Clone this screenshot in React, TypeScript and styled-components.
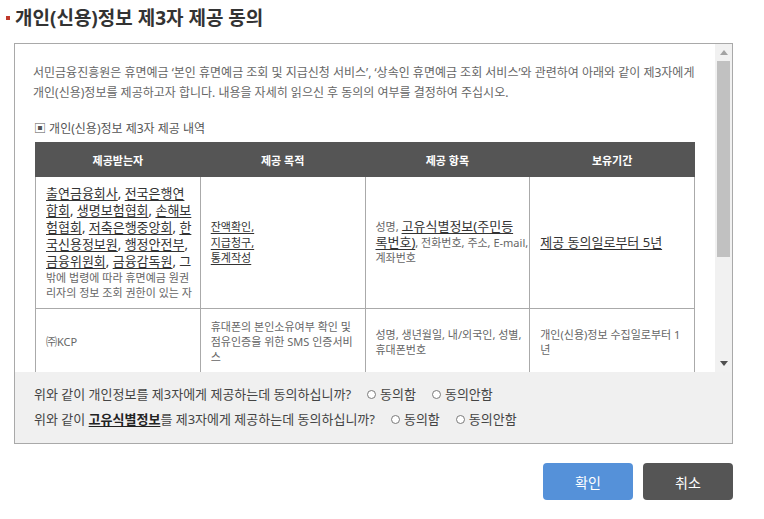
import React from "react";
import styled, { createGlobalStyle } from "styled-components";

const Global = createGlobalStyle`
  html, body { margin: 0; padding: 0; background: #fff; }
  body { font-family: "Noto Sans", "Noto Sans CJK KR", sans-serif; color: #555; }
  * { box-sizing: border-box; }
`;

const Page = styled.div`
  width: 764px;
  height: 519px;
  padding: 6px 31px 0 6px;
  display: flex;
  flex-direction: column;
`;

const Title = styled.h1`
  margin: 0;
  height: 24px;
  display: flex;
  align-items: center;
  gap: 5px;
  font-size: 19px;
  line-height: 24px;
  font-weight: 700;
  color: #333;
`;

const TitleMark = styled.span`
  flex: none;
  width: 4px;
  height: 4px;
  background: #c0392b;
`;

const Dialog = styled.div`
  margin: 13px 0 0 8px;
  height: 401px;
  border: 1px solid #a9a9a9;
  display: flex;
  flex-direction: column;
`;

const ScrollArea = styled.div`
  height: 328px;
  display: flex;
  flex: none;
`;

const Content = styled.div`
  flex: 1;
  overflow: hidden;
  padding: 19px 21px 0 18px;
  background: #fff;
`;

const Intro = styled.p`
  margin: 0;
  font-size: 12px;
  line-height: 20px;
  color: #666;
  white-space: nowrap;
`;

const SectionLabel = styled.p`
  margin: 16px 0 3px 1px;
  font-size: 12px;
  line-height: 20px;
  color: #555;
`;

const Table = styled.table`
  width: 660px;
  margin-left: 2px;
  border-collapse: collapse;
  table-layout: fixed;
`;

const Th = styled.th`
  height: 34px;
  background: #555;
  border: 1px solid #555;
  color: #fff;
  font-size: 11px;
  font-weight: 700;
  text-align: center;
  vertical-align: middle;
`;

const Td = styled.td<{ $pad?: number }>`
  border: 1px solid #aaa;
  padding: ${(p) => p.$pad ?? 8}px 10px;
  vertical-align: middle;
  font-size: 11px;
  line-height: 15px;
  color: #666;
`;

const Line = styled.span<{ $size?: number; $lh?: number }>`
  display: block;
  white-space: nowrap;
  font-size: ${(p) => p.$size ?? 11}px;
  line-height: ${(p) => p.$lh ?? 15}px;
  color: ${(p) => ((p.$size ?? 11) > 11 ? "#333" : "#666")};
`;

const Big = styled.span<{ $u?: boolean }>`
  font-size: 13px;
  color: #333;
  text-decoration: ${(p) => (p.$u === false ? "none" : "underline")};
  text-underline-offset: 2px;
`;

const Purpose = styled.span`
  display: block;
  font-size: 11px;
  line-height: 15.5px;
  color: #333;
  text-decoration: underline;
  text-underline-offset: 2px;
`;

const Scrollbar = styled.div`
  flex: none;
  width: 17px;
  background: #f1f1f1;
  display: flex;
  flex-direction: column;
`;

const ScrollButton = styled.div`
  height: 17px;
  flex: none;
  display: flex;
  align-items: center;
  justify-content: center;
`;

const Track = styled.div`
  flex: 1;
  padding: 0 2px;
`;

const Thumb = styled.div`
  height: 196px;
  background: #c1c1c1;
`;

const Agreement = styled.div`
  flex: 1;
  background: #f0f0f0;
  padding: 10px 19px;
  font-size: 13px;
  line-height: 25px;
  color: #444;
`;

const Question = styled.div`
  display: flex;
  align-items: center;
  gap: 16px;
  white-space: nowrap;
`;

const Bold = styled.span`
  font-weight: 700;
  color: #222;
  text-decoration: underline;
  text-underline-offset: 2px;
`;

const Radio = styled.label`
  display: inline-flex;
  align-items: center;
  gap: 4px;
`;

const Circle = styled.span`
  width: 9px;
  height: 9px;
  border: 1px solid #7a7a7a;
  border-radius: 50%;
  background: #fff;
`;

const Buttons = styled.div`
  margin-top: 19px;
  display: flex;
  justify-content: flex-end;
  gap: 10px;
`;

const Button = styled.button<{ $primary?: boolean }>`
  width: 90px;
  height: 37px;
  border: none;
  border-radius: 4px;
  background: ${(p) => (p.$primary ? "#5591d9" : "#555555")};
  color: #fff;
  font-family: inherit;
  font-size: 14px;
  cursor: pointer;
`;

const Arrow = ({ up, color }: { up?: boolean; color: string }) => (
  <svg width="8" height="5" viewBox="0 0 8 5">
    <polygon points={up ? "0,5 8,5 4,0" : "0,0 8,0 4,5"} fill={color} />
  </svg>
);

const Comma = ({ text = ", " }: { text?: string }) => <Big $u={false}>{text}</Big>;

export default function App() {
  return (
    <>
      <Global />
      <Page>
        <Title>
          <TitleMark />
          개인(신용)정보 제3자 제공 동의
        </Title>
        <Dialog>
          <ScrollArea>
            <Content>
              <Intro>
                서민금융진흥원은 휴면예금 ‘본인 휴면예금 조회 및 지급신청 서비스’, ‘상속인 휴면예금 조회 서비스’와 관련하여 아래와 같이 제3자에게
                <br />
                개인(신용)정보를 제공하고자 합니다. 내용을 자세히 읽으신 후 동의의 여부를 결정하여 주십시오.
              </Intro>
              <SectionLabel>▣ 개인(신용)정보 제3자 제공 내역</SectionLabel>
              <Table>
                <thead>
                  <tr>
                    <Th>제공받는자</Th>
                    <Th>제공 목적</Th>
                    <Th>제공 항목</Th>
                    <Th>보유기간</Th>
                  </tr>
                </thead>
                <tbody>
                  <tr>
                    <Td>
                      <Line $size={13} $lh={17}>
                        <Big>출연금융회사</Big>
                        <Comma />
                        <Big>전국은행연</Big>
                      </Line>
                      <Line $size={13} $lh={17}>
                        <Big>합회</Big>
                        <Comma />
                        <Big>생명보험협회</Big>
                        <Comma />
                        <Big>손해보</Big>
                      </Line>
                      <Line $size={13} $lh={17}>
                        <Big>험협회</Big>
                        <Comma />
                        <Big>저축은행중앙회</Big>
                        <Comma />
                        <Big>한</Big>
                      </Line>
                      <Line $size={13} $lh={17}>
                        <Big>국신용정보원</Big>
                        <Comma />
                        <Big>행정안전부</Big>
                        <Comma text="," />
                      </Line>
                      <Line $size={13} $lh={17}>
                        <Big>금융위원회</Big>
                        <Comma />
                        <Big>금융감독원</Big>
                        <Comma text=", 그" />
                      </Line>
                      <Line>밖에 법령에 따라 휴면예금 원권</Line>
                      <Line>리자의 정보 조회 권한이 있는 자</Line>
                    </Td>
                    <Td>
                      <Purpose>잔액확인,</Purpose>
                      <Purpose>지급청구,</Purpose>
                      <Purpose>통계작성</Purpose>
                    </Td>
                    <Td>
                      <Line $lh={15.5}>
                        성명, <Big>고유식별정보(주민등</Big>
                      </Line>
                      <Line $lh={15.5}>
                        <Big>록번호)</Big>, 전화번호, 주소, E-mail,
                      </Line>
                      <Line $lh={15.5}>계좌번호</Line>
                    </Td>
                    <Td>
                      <Big>제공 동의일로부터 5년</Big>
                    </Td>
                  </tr>
                  <tr>
                    <Td $pad={10}>
                      <Line>㈜KCP</Line>
                    </Td>
                    <Td $pad={10}>
                      <Line>휴대폰의 본인소유여부 확인 및</Line>
                      <Line>점유인증을 위한 SMS 인증서비</Line>
                      <Line>스</Line>
                    </Td>
                    <Td $pad={10}>
                      <Line>성명, 생년월일, 내/외국인, 성별,</Line>
                      <Line>휴대폰번호</Line>
                    </Td>
                    <Td $pad={10}>
                      <Line>개인(신용)정보 수집일로부터 1</Line>
                      <Line>년</Line>
                    </Td>
                  </tr>
                </tbody>
              </Table>
            </Content>
            <Scrollbar>
              <ScrollButton>
                <Arrow up color="#a3a3a3" />
              </ScrollButton>
              <Track>
                <Thumb />
              </Track>
              <ScrollButton>
                <Arrow color="#505050" />
              </ScrollButton>
            </Scrollbar>
          </ScrollArea>
          <Agreement>
            <Question>
              <span>위와 같이 개인정보를 제3자에게 제공하는데 동의하십니까?</span>
              <Radio>
                <Circle />
                동의함
              </Radio>
              <Radio>
                <Circle />
                동의안함
              </Radio>
            </Question>
            <Question>
              <span>
                위와 같이 <Bold>고유식별정보</Bold>를 제3자에게 제공하는데 동의하십니까?
              </span>
              <Radio>
                <Circle />
                동의함
              </Radio>
              <Radio>
                <Circle />
                동의안함
              </Radio>
            </Question>
          </Agreement>
        </Dialog>
        <Buttons>
          <Button $primary>확인</Button>
          <Button>취소</Button>
        </Buttons>
      </Page>
    </>
  );
}
